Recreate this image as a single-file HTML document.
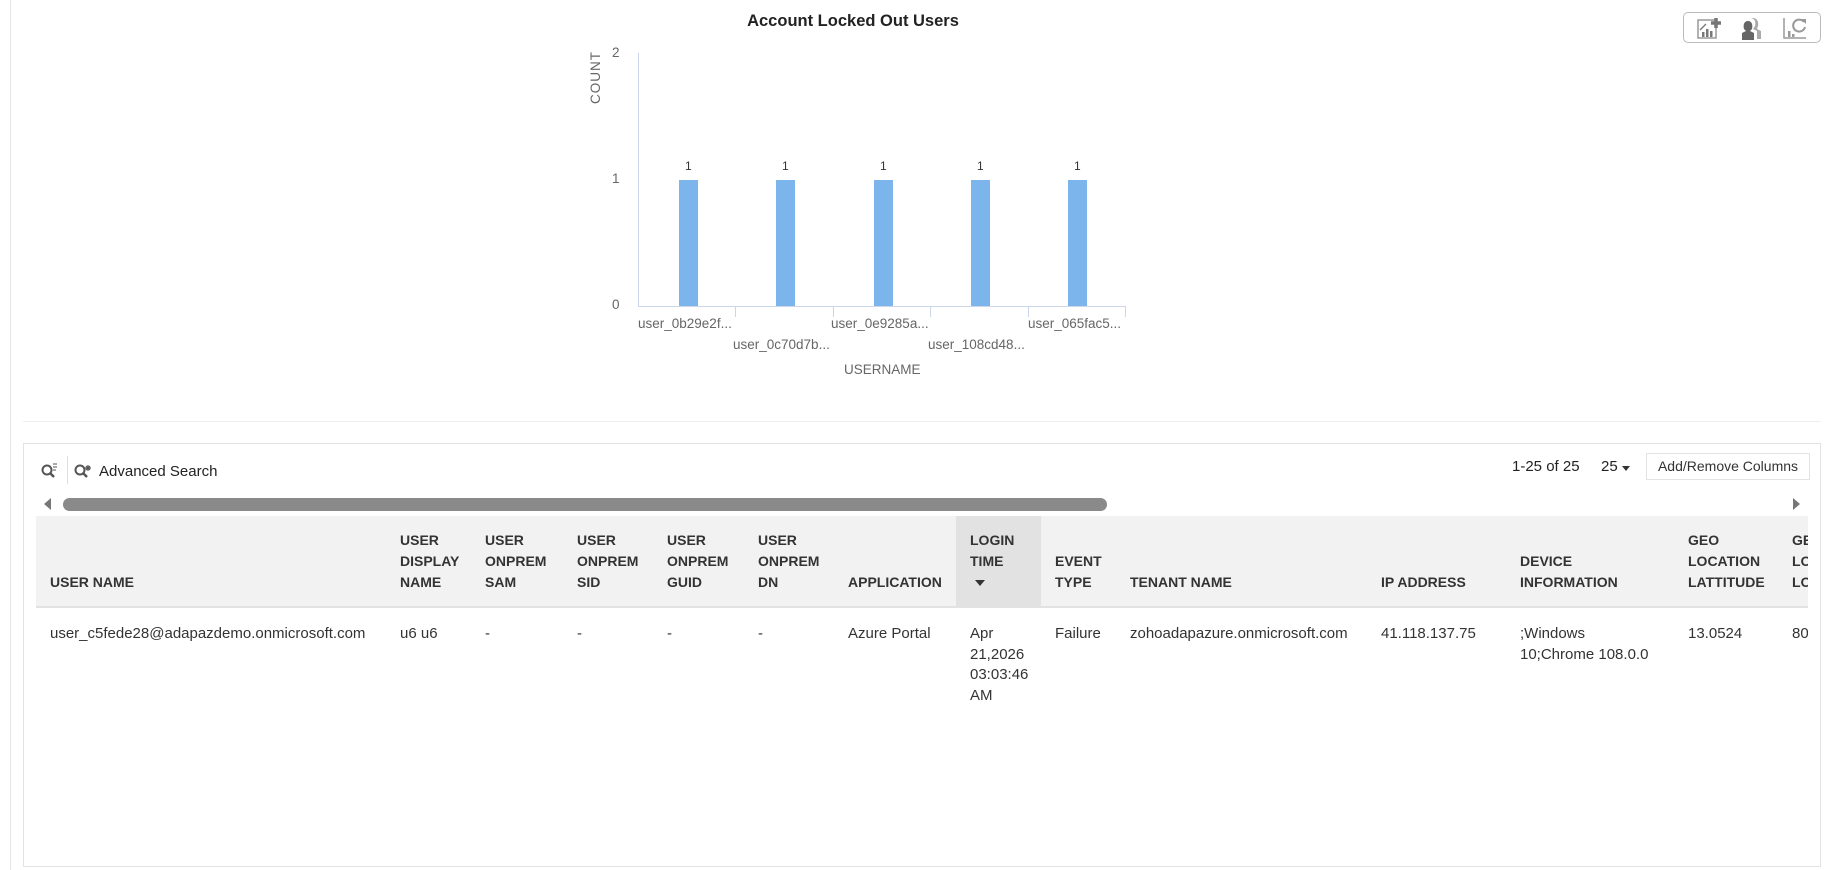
<!DOCTYPE html>
<html><head><meta charset="utf-8">
<style>
*{margin:0;padding:0;box-sizing:border-box}
body{width:1834px;height:870px;background:#fff;font-family:"Liberation Sans",sans-serif;position:relative;overflow:hidden;color:#222}
.a{position:absolute;white-space:nowrap}
.h{font-size:14px;font-weight:bold;color:#333;line-height:21px}
.d{font-size:15px;color:#333;line-height:20.5px}
.ax{font-size:13.5px;color:#666}
</style></head><body>
<div class="a" style="left:10px;top:0;width:1px;height:870px;background:#e6e6e6"></div>
<div class="a" style="left:0;top:12px;width:1706px;text-align:center;font-size:16.5px;font-weight:bold;color:#222">Account Locked Out Users</div>

<div class="a" style="left:1683px;top:12px;width:138px;height:31px;border:1px solid #bbb;border-radius:5px"></div>
<svg class="a" style="left:1697px;top:16px" width="28" height="24" viewBox="0 0 28 24"><rect x="1" y="4" width="18" height="18" fill="none" stroke="#999" stroke-width="1.5"/><rect x="5" y="16" width="2.5" height="5" fill="#777"/><rect x="9" y="13" width="2.5" height="8" fill="#777"/><rect x="13" y="15" width="2.5" height="6" fill="#777"/><path d="M3 14 L9 8" stroke="#777" stroke-width="1.3"/><path d="M19 2v10M14 7h10" stroke="#777" stroke-width="3.5"/></svg>
<svg class="a" style="left:1740px;top:16px" width="26" height="24" viewBox="0 0 26 24"><path d="M10 2c5 0 6 4 5 8l-2 3 4 2v8H21v-8l-4-2 1-3c1-4-1-8-5-8z" fill="#aaa"/><path d="M8 5c4 0 5 4 4 8l-2 2 4 2v7H2v-7l4-2-2-2c-1-4 0-8 4-8z" fill="#666"/></svg>
<svg class="a" style="left:1782px;top:16px" width="26" height="24" viewBox="0 0 26 24"><path d="M2 2v20h22" fill="none" stroke="#999" stroke-width="1.5"/><rect x="6" y="15" width="2.5" height="6" fill="#999"/><rect x="10" y="18" width="2.5" height="3" fill="#999"/><path d="M22 6a6 6 0 1 0 1 5" fill="none" stroke="#999" stroke-width="2"/><path d="M19 3h5v5z" fill="#999"/></svg>

<!-- chart -->
<div class="a ax" style="left:588px;top:104px;transform:rotate(-90deg);transform-origin:left top;letter-spacing:1px">COUNT</div>
<div class="a ax" style="left:612px;top:45px">2</div>
<div class="a ax" style="left:612px;top:171px">1</div>
<div class="a ax" style="left:612px;top:297px">0</div>
<div class="a" style="left:638px;top:53px;width:1px;height:253px;background:#ccd6eb"></div>
<div class="a" style="left:638px;top:306px;width:488px;height:1px;background:#ccd6eb"></div>
<div class="a" style="left:735px;top:306px;width:1px;height:11px;background:#ccd6eb"></div>
<div class="a" style="left:833px;top:306px;width:1px;height:11px;background:#ccd6eb"></div>
<div class="a" style="left:930px;top:306px;width:1px;height:11px;background:#ccd6eb"></div>
<div class="a" style="left:1028px;top:306px;width:1px;height:11px;background:#ccd6eb"></div>
<div class="a" style="left:1125px;top:306px;width:1px;height:11px;background:#ccd6eb"></div>
<div class="a" style="left:679px;top:180px;width:19px;height:126px;background:#7cb5ec"></div>
<div class="a" style="left:776px;top:180px;width:19px;height:126px;background:#7cb5ec"></div>
<div class="a" style="left:874px;top:180px;width:19px;height:126px;background:#7cb5ec"></div>
<div class="a" style="left:971px;top:180px;width:19px;height:126px;background:#7cb5ec"></div>
<div class="a" style="left:1068px;top:180px;width:19px;height:126px;background:#7cb5ec"></div>
<div class="a" style="left:685px;top:159px;font-size:12px;color:#333">1</div>
<div class="a" style="left:782px;top:159px;font-size:12px;color:#333">1</div>
<div class="a" style="left:880px;top:159px;font-size:12px;color:#333">1</div>
<div class="a" style="left:977px;top:159px;font-size:12px;color:#333">1</div>
<div class="a" style="left:1074px;top:159px;font-size:12px;color:#333">1</div>
<div class="a ax" style="left:638px;top:316px">user_0b29e2f...</div>
<div class="a ax" style="left:733px;top:337px">user_0c70d7b...</div>
<div class="a ax" style="left:831px;top:316px">user_0e9285a...</div>
<div class="a ax" style="left:928px;top:337px">user_108cd48...</div>
<div class="a ax" style="left:1028px;top:316px">user_065fac5...</div>
<div class="a ax" style="left:844px;top:362px;font-size:13.5px">USERNAME</div>

<div class="a" style="left:23px;top:421px;width:1798px;height:1px;background:#eee"></div>

<!-- table panel -->
<div class="a" style="left:23px;top:443px;width:1798px;height:424px;border:1px solid #e3e3e3"></div>
<svg class="a" style="left:40px;top:462px" width="18" height="18" viewBox="0 0 18 18"><circle cx="7" cy="8" r="4.5" fill="none" stroke="#555" stroke-width="2"/><path d="M10 11l4 4" stroke="#555" stroke-width="2.5"/><path d="M13 2h4M13 5h4M13 8h3" stroke="#555" stroke-width="1"/></svg>
<div class="a" style="left:67px;top:456px;width:1px;height:28px;background:#ddd"></div>
<svg class="a" style="left:73px;top:462px" width="20" height="18" viewBox="0 0 20 18"><circle cx="7" cy="8" r="4.5" fill="none" stroke="#555" stroke-width="2"/><path d="M10 11l4 4" stroke="#555" stroke-width="2.5"/><path d="M15 3v6M12 6h6M13 4l4 4M17 4l-4 4" stroke="#555" stroke-width="1.2"/></svg>
<div class="a" style="left:99px;top:463px;font-size:15px;color:#222">Advanced Search</div>
<div class="a" style="left:1512px;top:458px;font-size:15px;color:#222">1-25 of 25</div>
<div class="a" style="left:1601px;top:458px;font-size:15px;color:#222">25</div>
<div class="a" style="left:1622px;top:466px;border-left:4px solid transparent;border-right:4px solid transparent;border-top:5px solid #333"></div>
<div class="a" style="left:1646px;top:453px;width:164px;height:27px;border:1px solid #e3e3e3;font-size:14px;color:#333;text-align:center;line-height:25px">Add/Remove Columns</div>

<div class="a" style="left:44px;top:498px;border-top:6px solid transparent;border-bottom:6px solid transparent;border-right:7px solid #777"></div>
<div class="a" style="left:63px;top:498px;width:1044px;height:13px;border-radius:7px;background:#8a8a8a"></div>
<div class="a" style="left:1793px;top:498px;border-top:6px solid transparent;border-bottom:6px solid transparent;border-left:7px solid #777"></div>

<div class="a" style="left:36px;top:516px;width:1772px;height:92px;background:#f2f2f2;border-bottom:2px solid #e2e2e2"></div>
<div class="a" style="left:956px;top:516px;width:85px;height:90px;background:#e2e2e2"></div>

<div class="a h" style="left:50px;top:572px">USER NAME</div>
<div class="a h" style="left:400px;top:530px">USER<br>DISPLAY<br>NAME</div>
<div class="a h" style="left:485px;top:530px">USER<br>ONPREM<br>SAM</div>
<div class="a h" style="left:577px;top:530px">USER<br>ONPREM<br>SID</div>
<div class="a h" style="left:667px;top:530px">USER<br>ONPREM<br>GUID</div>
<div class="a h" style="left:758px;top:530px">USER<br>ONPREM<br>DN</div>
<div class="a h" style="left:848px;top:572px">APPLICATION</div>
<div class="a h" style="left:970px;top:530px">LOGIN<br>TIME</div>
<div class="a" style="left:975px;top:580px;border-left:5px solid transparent;border-right:5px solid transparent;border-top:6px solid #333"></div>
<div class="a h" style="left:1055px;top:551px">EVENT<br>TYPE</div>
<div class="a h" style="left:1130px;top:572px">TENANT NAME</div>
<div class="a h" style="left:1381px;top:572px">IP ADDRESS</div>
<div class="a h" style="left:1520px;top:551px">DEVICE<br>INFORMATION</div>
<div class="a h" style="left:1688px;top:530px">GEO<br>LOCATION<br>LATTITUDE</div>
<div class="a h" style="left:1792px;top:530px;width:16px;overflow:hidden">GEO<br>LOC<br>LOC</div>

<div class="a d" style="left:50px;top:624px">user_c5fede28@adapazdemo.onmicrosoft.com</div>
<div class="a d" style="left:400px;top:624px">u6 u6</div>
<div class="a d" style="left:485px;top:624px">-</div>
<div class="a d" style="left:577px;top:624px">-</div>
<div class="a d" style="left:667px;top:624px">-</div>
<div class="a d" style="left:758px;top:624px">-</div>
<div class="a d" style="left:848px;top:624px">Azure Portal</div>
<div class="a d" style="left:970px;top:624px">Apr<br>21,2026<br>03:03:46<br>AM</div>
<div class="a d" style="left:1055px;top:624px">Failure</div>
<div class="a d" style="left:1130px;top:624px">zohoadapazure.onmicrosoft.com</div>
<div class="a d" style="left:1381px;top:624px">41.118.137.75</div>
<div class="a d" style="left:1520px;top:624px">;Windows<br>10;Chrome 108.0.0</div>
<div class="a d" style="left:1688px;top:624px">13.0524</div>
<div class="a d" style="left:1792px;top:624px;width:16px;overflow:hidden">80</div>
</body></html>
